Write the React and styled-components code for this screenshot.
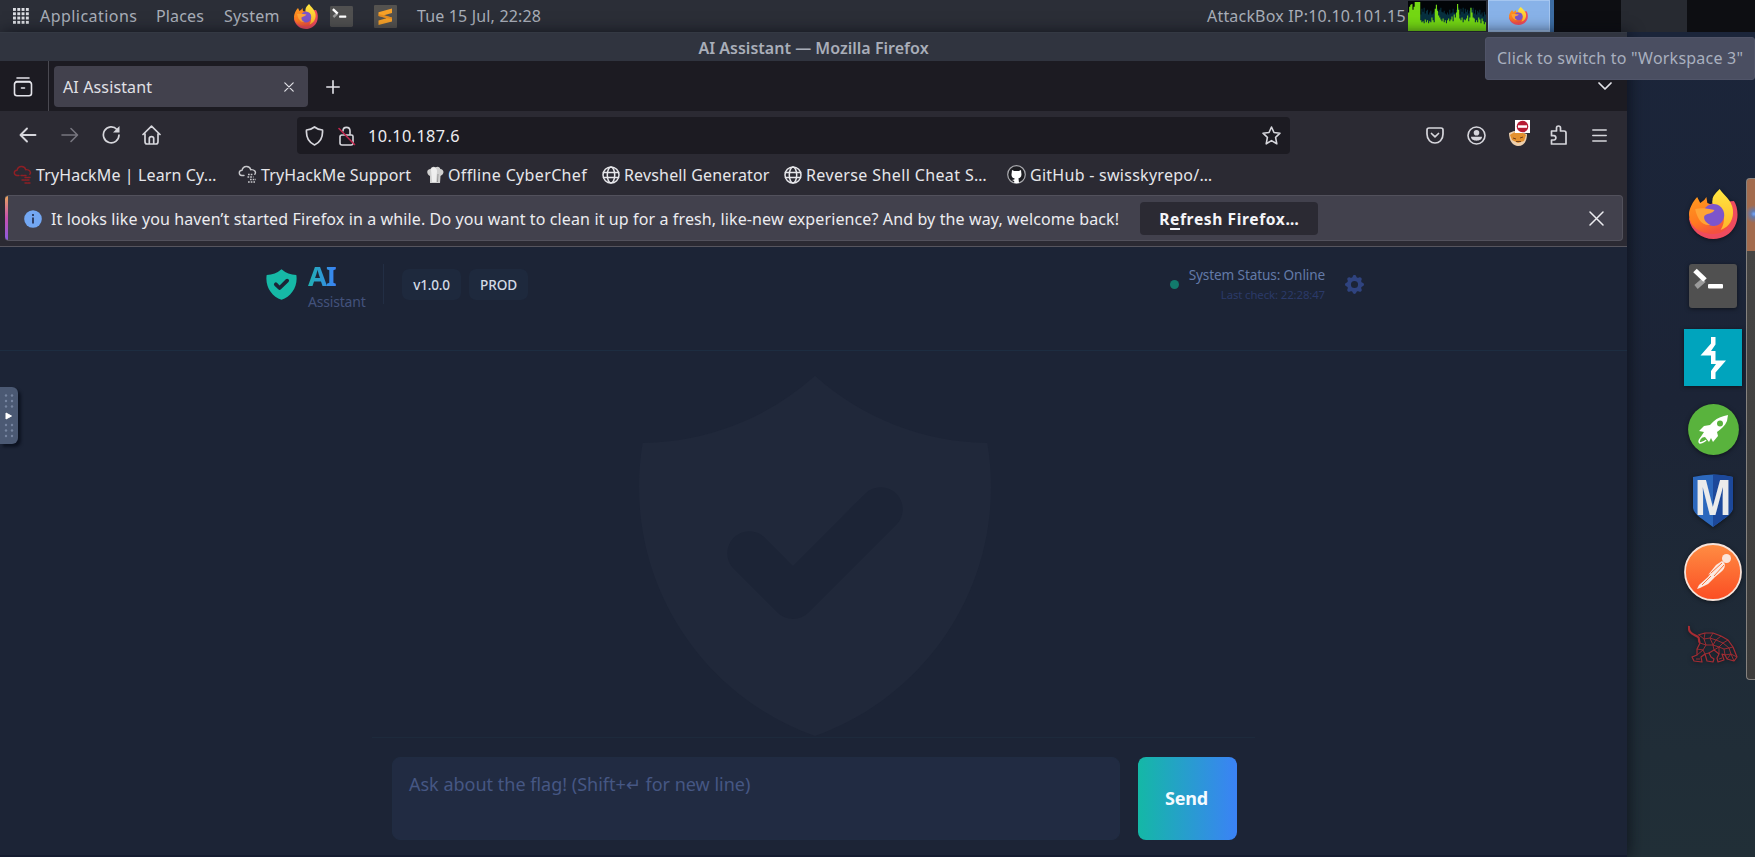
import React from "react";
import styled, { createGlobalStyle, css } from "styled-components";

const GlobalStyle = createGlobalStyle`
  *, *::before, *::after { box-sizing: border-box; }
  html, body { margin: 0; background: #1c2436; overflow: hidden; }
  body { font-family: "Noto Sans", "Open Sans", sans-serif; font-size: 16px; }
  svg { display: block; flex: none; }
`;

const Label = styled.span`
  flex: none;
  width: ${(p) => (p.$w ? `${p.$w}px` : "auto")};
  font-size: ${(p) => p.$size || 16}px;
  font-weight: ${(p) => p.$weight || 400};
  letter-spacing: ${(p) => p.$track || 0}px;
  line-height: 20px;
  color: ${(p) => p.$color || "inherit"};
  white-space: nowrap;
`;

const Screen = styled.div`
  position: relative;
  display: flex;
  flex-direction: column;
  width: 1755px;
  height: 857px;
  overflow: hidden;
`;

/* Desktop panel */
const Panel = styled.header`
  display: flex;
  align-items: center;
  flex: none;
  height: 32px;
  padding-left: 13px;
  background: #2b2e37;
  color: #a9aeb9;
`;
const PanelMenus = styled.nav`
  display: flex;
  gap: 19px;
  margin-left: 11px;
`;
const Launchers = styled.div`
  display: flex;
  align-items: center;
  margin-left: 14px;
`;
const LauncherSlot = styled.div`
  margin-left: ${(p) => p.$ml}px;
`;
const PanelClock = styled.div`
  margin-left: 20px;
`;
const PanelRight = styled.div`
  display: flex;
  align-items: center;
  margin-left: auto;
  height: 32px;
`;
const Workspaces = styled.div`
  display: flex;
  height: 32px;
  margin-left: 2px;
`;
const Workspace = styled.div`
  display: flex;
  align-items: center;
  justify-content: center;
  width: ${(p) => p.$w}px;
  background: ${(p) => (p.$dark ? "#0d0e12" : "#272a31")};
  ${(p) =>
    p.$active &&
    css`
      padding-right: 2px;
      background: #88b2e8;
      border: 1px solid #a5c6f0;
      border-bottom-width: 2px;
      box-shadow: 4px 0 0 #3d6da3;
      z-index: 1;
      margin-right: 4px;
    `}
`;
const Tooltip = styled.div`
  position: absolute;
  z-index: 5;
  top: 37px;
  right: 0;
  width: 270px;
  height: 43px;
  padding: 9px 11px;
  border-radius: 3px;
  background: #4a4e61;
  border: 1px solid #505468;
  color: #a9b0bf;
`;

/* Desktop body */
const Desktop = styled.div`
  display: flex;
  flex: 1;
  min-height: 0;
  background: linear-gradient(180deg, #1b253a 0%, #1c2436 45%, #1f2b37 75%, #212f37 100%);
`;
const Window = styled.main`
  position: relative;
  z-index: 1;
  display: flex;
  flex-direction: column;
  flex: none;
  width: 1627px;
  box-shadow: 2px 0 14px rgba(8, 12, 20, 0.7);
`;
const TitleBar = styled.div`
  display: flex;
  justify-content: center;
  flex: none;
  height: 29px;
  padding-top: 5px;
  background: #30343f;
  border-top: 1px solid #343943;
  color: #a9aeb9;
`;
const TabStrip = styled.div`
  display: flex;
  align-items: center;
  flex: none;
  height: 50px;
  background: #1c1b22;
  color: #e4e4ea;
`;
const ViewButton = styled.div`
  display: flex;
  align-items: center;
  width: 49px;
  height: 50px;
  padding: 2px 0 0 13px;
  border-right: 1px solid #4a4951;
`;
const Tab = styled.div`
  display: flex;
  align-items: center;
  justify-content: space-between;
  width: 254px;
  height: 41px;
  margin: 0 18px 0 5px;
  padding: 1px 14px 0 9px;
  border-radius: 4px;
  background: #42414d;
  color: #e0e0e6;
`;
const PlusButton = styled.div`
  padding-top: 2px;
`;
const TabListButton = styled.div`
  margin: 0 15px 0 auto;
`;
const NavBar = styled.div`
  display: flex;
  align-items: center;
  flex: none;
  height: 47px;
  padding: 1px 18px 0 19px;
  background: #2b2a33;
  color: #d6d6dc;
`;
const NavGroup = styled.div`
  display: flex;
  align-items: center;
`;
const UrlBar = styled.div`
  display: flex;
  align-items: center;
  width: 993px;
  height: 37px;
  margin: 0 135px 0 135px;
  padding: 1px 9px 0 8px;
  border-radius: 4px;
  background: #1c1b22;
`;
const UrlStar = styled.div`
  margin-left: auto;
`;
const Bookmarks = styled.div`
  display: flex;
  align-items: center;
  flex: none;
  height: 37px;
  padding: 0 0 4px 13px;
  background: #2b2a33;
  color: #e6e6ea;
`;
const Bookmark = styled.div`
  display: flex;
  align-items: center;
  width: ${(p) => p.$w}px;
  gap: 4px;
`;
const NoticeArea = styled.div`
  flex: none;
  height: 52px;
  padding: 0 4px 0 5px;
  background: #2b2a33;
  border-bottom: 1px solid #56555e;
`;
const Notice = styled.div`
  display: flex;
  align-items: center;
  height: 46px;
  padding: 1px 18px 0 19px;
  border: 1px solid #52515c;
  border-left: 0;
  border-radius: 4px;
  background:
    linear-gradient(180deg, #e8a45c, #c850b0 50%, #8a5be0) 0 0 / 3px 100% no-repeat,
    #42414d;
  color: #ececf0;
`;
const NoticeText = styled.div`
  margin-left: 9px;
`;
const NoticeButton = styled.button`
  width: 178px;
  height: 33px;
  margin: 0 auto 0 21px;
  padding: 1px 0 0 19px;
  border: 0;
  border-radius: 4px;
  background: #2b2a33;
  color: #f4f4f8;
  font-family: inherit;
  text-align: left;
  u { text-underline-offset: 3px; text-decoration-thickness: 2px; }
`;

/* Page shown in the browser */
const Page = styled.section`
  display: flex;
  flex-direction: column;
  flex: 1;
  min-height: 0;
  background: #1c2436;
`;
const PageHeader = styled.header`
  display: flex;
  flex: none;
  height: 104px;
  padding: 16px 263px 0 266px;
  border-bottom: 1px solid #1d2d41;
`;
const Brand = styled.div`
  display: flex;
  align-items: center;
  height: 42px;
`;
const BrandText = styled.div`
  display: flex;
  flex-direction: column;
  padding-top: 7px;
  margin-left: 11px;
`;
const BrandName = styled.span`
  width: 28px;
  margin: -2px 0 1px;
  font-size: 27.5px;
  font-weight: 700;
  line-height: 30px;
  letter-spacing: -1px;
  color: transparent;
  background: linear-gradient(90deg, #20b0b0, #3b82f6);
  background-clip: text;
  -webkit-background-clip: text;
`;
const BrandDivider = styled.div`
  width: 1px;
  height: 40px;
  margin: 0 18px 0 15px;
  background: #222e44;
`;
const Badge = styled.div`
  display: flex;
  align-items: center;
  justify-content: center;
  width: 59px;
  height: 31px;
  margin: 1px 8px 0 0;
  border-radius: 7px;
  background: #1e293d;
  color: #d3dae5;
`;
const Status = styled.div`
  display: flex;
  align-items: center;
  height: 42px;
  margin-left: auto;
`;
const StatusDot = styled.i`
  width: 9px;
  height: 9px;
  margin: 0 11px 0 0;
  border-radius: 50%;
  background: #127a6c;
`;
const StatusText = styled.div`
  display: flex;
  flex-direction: column;
  align-items: flex-end;
  width: 135px;
  margin: 1px 20px 0 0;
`;
const Conversation = styled.div`
  display: flex;
  flex: none;
  justify-content: center;
  height: 386px;
  padding-left: 2px;
  overflow: hidden;
`;
const Watermark = styled.svg`
  margin-top: -18px;
`;
const Composer = styled.form`
  display: flex;
  gap: 18px;
  width: 883px;
  flex: 1;
  margin: 0 auto;
  padding: 19px 18px 0 20px;
  border-top: 1px solid #1d2a3c;
`;
const Prompt = styled.div`
  width: 728px;
  height: 83px;
  padding: 16px;
  border-radius: 8px;
  border: 1px solid #202c42;
  background: #212b42;
  color: #465784;
`;
const SendButton = styled.button`
  width: 99px;
  height: 83px;
  padding: 0 2px 0 0;
  border: 0;
  border-radius: 8px;
  background: linear-gradient(90deg, #14b8a6, #3b82f6);
  color: #f4fafe;
  font-family: inherit;
`;
const PageEdge = styled.div`
  flex: none;
  height: 2px;
  background: #151c30;
`;

/* Dock */
const DockColumn = styled.aside`
  display: flex;
  flex-direction: column;
  align-items: center;
  flex: 1;
  padding: 157px 0 0 53px;
  svg { filter: drop-shadow(0 1px 2px rgba(0, 0, 0, 0.5)); }
`;
const DockItem = styled.div`
  display: flex;
  align-items: center;
  justify-content: center;
  width: 58px;
  height: ${(p) => p.$h}px;
  margin-bottom: ${(p) => p.$gap}px;
`;
const DockPreview = styled.div`
  flex: none;
  width: 9px;
  height: 502px;
  margin-top: 146px;
  border: 1px solid #85827f;
  border-right: 0;
  border-radius: 4px 0 0 4px;
  background:
    radial-gradient(circle at 7px 35px, #74a8ff 0, #6478a8 3px, transparent 9px),
    linear-gradient(180deg, #a36b4d 0 72px, #454443 72px, #3d3c3b 100%);
`;
const SideHandle = styled.div`
  position: absolute;
  z-index: 6;
  left: 0;
  top: 387px;
  display: flex;
  align-items: center;
  justify-content: center;
  width: 18px;
  height: 57px;
  border-radius: 0 6px 6px 0;
  background: #4b5973;
  box-shadow: 3px 3px 3px rgba(4, 8, 20, 0.6);
`;

const Line = styled.svg.attrs({ fill: "none", stroke: "currentColor", strokeLinecap: "round", strokeLinejoin: "round" })`
  margin-left: ${(p) => p.$ml || 0}px;
  margin-right: ${(p) => p.$mr || 0}px;
`;

const SHIELD =
  "M2.166 4.999A11.954 11.954 0 0010 1.944 11.954 11.954 0 0017.834 5c.11.65.166 1.32.166 2.001 0 5.225-3.34 9.67-8 11.317C5.34 16.67 2 12.225 2 7c0-.682.057-1.35.166-2.001zm11.541 3.708a1 1 0 00-1.414-1.414L9 10.586 7.707 9.293a1 1 0 00-1.414 1.414l2 2a1 1 0 001.414 0l4-4z";
const COG =
  "M11.49 3.17c-.38-1.56-2.6-1.56-2.98 0a1.532 1.532 0 01-2.286.948c-1.372-.836-2.942.734-2.106 2.106.54.886.061 2.042-.947 2.287-1.561.379-1.561 2.6 0 2.978a1.532 1.532 0 01.947 2.287c-.836 1.372.734 2.942 2.106 2.106a1.532 1.532 0 012.287.947c.379 1.561 2.6 1.561 2.978 0a1.533 1.533 0 012.287-.947c1.372.836 2.942-.734 2.106-2.106a1.533 1.533 0 01.947-2.287c1.561-.379 1.561-2.6 0-2.978a1.532 1.532 0 01-.947-2.287c.836-1.372-.734-2.942-2.106-2.106a1.532 1.532 0 01-2.287-.947zM10 13a3 3 0 100-6 3 3 0 000 6z";

function Firefox({ w, h, id }) {
  return (
    <svg width={w} height={h} viewBox="0 0 48 50" preserveAspectRatio="none">
      <defs>
        <linearGradient id={`${id}a`} x1="0" y1="0" x2="0.4" y2="1">
          <stop offset="0" stopColor="#ff9a1f" />
          <stop offset="0.65" stopColor="#ff7a20" />
          <stop offset="1" stopColor="#f4513f" />
        </linearGradient>
        <linearGradient id={`${id}b`} x1="0" y1="0" x2="0" y2="1">
          <stop offset="0" stopColor="#ffe840" />
          <stop offset="1" stopColor="#ffb52b" />
        </linearGradient>
      </defs>
      <path fill="#ee4b5e" d="M44 12C48 18 49 29 45 37C41 45 33 50 24 50C12 50 2 42 0 30L3 22L24 14Z" />
      <path fill={`url(#${id}a)`} d="M8 8L11 14L15 11L17 8L18 14L28 18L42 16C46 29 39 45 24 45C11 45 0 38 0 25C0 20 4 12 8 8Z" />
      <path fill={`url(#${id}b)`} d="M30 0C34 6 42 11 43 21C44 29 40 38 31 41C36 33 35 25 30 19C24 17 22 15 23 11C23 7 27 3 30 0Z" />
      <ellipse cx="24" cy="26" rx="10.5" ry="11" fill="#7d55cb" />
      <path fill="#ffa436" d="M6 20C11 19 16 19 25 21C23 25 18 24 15 27C14 31 17 34 21 36C12 37 8 29 6 20Z" />
    </svg>
  );
}
function Terminal({ w, h }) {
  return (
    <svg width={w} height={h} viewBox="0 0 48 44" preserveAspectRatio="none">
      <rect width="48" height="44" rx="3" fill="#505050" />
      <path d="M7 23L15 16" stroke="#9b9b9b" strokeWidth="5" />
      <path d="M6 6.500L16 16" stroke="#fff" strokeWidth="5" />
      <rect x="19" y="20" width="15" height="4.500" rx="1" fill="#fff" />
    </svg>
  );
}
function Sublime() {
  return (
    <svg width="23" height="23" viewBox="0 0 23 23">
      <rect width="23" height="23" rx="1" fill="#54524f" />
      <path fill="#f7a128" d="M4.500 7.300L18 3.500V8L10 10.300L18 12.500V16.500L4.500 20V15.500L12.500 13.200L4.500 11Z" />
      <path fill="#d9801c" d="M10 10.300L18 12.500V14L12.500 13.200L4.500 11V9Z" opacity=".6" />
    </svg>
  );
}
function Graph() {
  const tops = [12, 6, 4, 3, 9, 6, 1, 1, 1, 1, 1, 20, 22, 21, 23, 19, 22, 20, 23, 21, 22, 17, 20, 22, 8, 4, 10, 15, 17, 19, 21, 18, 22, 20, 23, 20, 18, 21, 19, 16, 21, 14, 17, 12, 3, 9, 18, 20, 17, 22, 19, 20, 18, 15, 21, 17, 7, 12, 17, 18, 22, 20, 22, 17, 19, 23, 18, 21, 24, 22];
  const blue = [20, 20, 20, 20, 20, 20, 20, 20, 20, 20, 20, 14, 8, 11, 7, 13, 10, 9, 14, 12, 10, 14, 13, 11, 8, 4, 8, 11, 9, 7, 11, 12, 10, 13, 14, 12, 14, 9, 13, 12, 8, 12, 13, 9, 3, 7, 14, 8, 11, 7, 13, 8, 11, 9, 13, 10, 7, 9, 7, 13, 9, 14, 10, 12, 9, 14, 12, 16, 11, 14];
  const area = (a) => "M0 31" + a.map((y, i) => `V${y}H${(i + 1) * (78 / a.length)}`).join("") + "V31Z";
  return (
    <svg width="78" height="30" viewBox="0 0 78 31" preserveAspectRatio="none">
      <rect width="78" height="31" fill="#020508" />
      <path d={area(blue)} fill="#07303f" />
      <path d={area(tops)} fill="#74d813" />
    </svg>
  );
}
function Globe() {
  return (
    <Line width="18" height="18" viewBox="0 0 18 18" strokeWidth="1.500">
      <circle cx="9" cy="9" r="8" />
      <ellipse cx="9" cy="9" rx="3.700" ry="8" />
      <path d="M1.500 6.500h15M1.500 11.500h15" />
    </Line>
  );
}
function CloudMark({ color, red }) {
  return (
    <Line width="19" height="19" viewBox="0 0 19 19" strokeWidth="1.400" color={color}>
      <path d="M6 10.500H3.800C.4 10 .5 5.500 4 5.300C5 .5 11.500 .2 12.800 4.700C16.500 4.300 18.500 7 16.800 9.300" />
      {red ? (
        <path strokeDasharray="2 1" d="M8 10.500h5M12 12.500h5M9 15h4M14 15h3M12 18h6" />
      ) : (
        <path strokeWidth="1.700" strokeLinecap="butt" strokeDasharray="1.700 1" d="M10 9.500h5M9.500 12h6M12 14.500h6M10 17h7" />
      )}
    </Line>
  );
}
function Hound() {
  return (
    <svg width="50" height="38" viewBox="0 0 50 38" fill="none" stroke="#a62c33" strokeWidth="1.200" strokeLinejoin="round">
      <path strokeWidth="2.200" d="M1 1C0 8 5 9 10 12C12 13 10 16 12 18" />
      <path d="M10 10L17 8L25 8L33 11L40 15L45 22L49 32L46 36L39 34L37 30L34 29L36 35L30 37L29 33L31 29L26 25L21 28L23 32L26 34L25 37L19 36L17 29L13 32L14 37L6 36L4 32L9 30L9 24L12 18" />
      <path strokeWidth=".9" d="M11 10L16 14L17 8M22 13L25 8M28 15L33 11M35 18L40 15M41 23L45 22M16 14L22 13L28 15L35 18L41 23L36 24M41 23L43 29L49 32M16 14L18 20L12 18M22 13L25 20L28 15M31 22L35 18M36 24L31 22L25 20L18 20L15 25L9 24M25 20L26 25L31 22L31 29M36 24L37 30L43 29L39 34M43 29L46 36M15 25L17 29L21 28M15 25L9 30M8 34L12 34M31 34L34 33" />
    </svg>
  );
}

const bookmarks = [
  { w: 225, text: "TryHackMe | Learn Cy…", track: 0.12, icon: <CloudMark color="#8f1f25" red /> },
  { w: 188, text: "TryHackMe Support", track: 0.12, icon: <CloudMark color="#c8c8cc" /> },
  {
    w: 176, text: "Offline CyberChef", track: 0.35,
    icon: (
      <svg width="18" height="18" viewBox="0 0 18 18">
        <path fill="#d0d0d0" d="M4 17V10C0 8 .5 3 4.500 3C5.500 .5 8 .2 9.500 1.200C12 0 14 1 14.300 3C18 3 19 8 14.500 10L14 17Z" />
        <path fill="#efefef" d="M5 3C8 0 11 2 11 5L10 16H6Z" />
        <path stroke="#999" d="M12 8L11.500 16" />
      </svg>
    ),
  },
  { w: 182, text: "Revshell Generator", track: 0.16, icon: <Globe /> },
  { w: 223, text: "Reverse Shell Cheat S…", track: 0.38, icon: <Globe /> },
  {
    w: 210, text: "GitHub - swisskyrepo/…", track: 0.27,
    icon: (
      <svg width="19" height="19" viewBox="0 0 19 19">
        <circle cx="9.500" cy="9.500" r="8.800" fill="#1d1d22" stroke="#a9a9ae" strokeWidth="1.200" />
        <path fill="#fff" d="M5 5L7.200 6H11.800L14 5L14.300 8C15 12 13 13 11.500 13.200L12 18H7.200V16L5 15L7.400 14.500L7.500 13.200C5 13 4 11 4.700 8Z" />
      </svg>
    ),
  },
];

export default function App() {
  return (
    <Screen>
      <GlobalStyle />
      <Panel>
        <svg width="16" height="16" viewBox="0 0 16 16" fill="#dcdee3">
          {[0, 4.3, 8.6, 12.9].map((y) => [0, 4.3, 8.6, 12.9].map((x) => <rect key={`${x}-${y}`} x={x} y={y} width="2.900" height="2.900" />))}
        </svg>
        <PanelMenus>
          <Label $w={97} $track={0.45}>Applications</Label>
          <Label $w={49} $track={0.14}>Places</Label>
          <Label $w={56} $track={0.2}>System</Label>
        </PanelMenus>
        <Launchers>
          <Firefox w={24} h={25} id="p" />
          <LauncherSlot $ml={12}><Terminal w={23} h={21} /></LauncherSlot>
          <LauncherSlot $ml={21}><Sublime /></LauncherSlot>
        </Launchers>
        <PanelClock><Label $track={0.16}>Tue 15 Jul, 22:28</Label></PanelClock>
        <PanelRight>
          <Label $w={201} $track={0.19}>AttackBox IP:10.10.101.15</Label>
          <Graph />
          <Workspaces>
            <Workspace $w={62} $active><Firefox w={19} h={18} id="w" /></Workspace>
            <Workspace $w={67} $dark />
            <Workspace $w={66} />
            <Workspace $w={68} $dark />
          </Workspaces>
        </PanelRight>
      </Panel>
      <Tooltip><Label $track={0.22}>Click to switch to "Workspace 3"</Label></Tooltip>

      <Desktop>
        <Window>
          <TitleBar><Label $weight={600} $track={0.02}>AI Assistant — Mozilla Firefox</Label></TitleBar>
          <TabStrip>
            <ViewButton>
              <Line width="20" height="20" viewBox="0 0 20 20" strokeWidth="1.600">
                <path d="M4 1H16M3 4.500H17" />
                <rect x="1.500" y="5" width="17" height="13.700" rx="2.500" />
                <path d="M8.500 11H11.500" />
              </Line>
            </ViewButton>
            <Tab>
              <Label $track={0.13}>AI Assistant</Label>
              <Line width="10" height="10" viewBox="0 0 10 10" strokeWidth="1.200"><path d="M.8.8L9.200 9.200M9.200.8L.8 9.200" /></Line>
            </Tab>
            <PlusButton>
              <Line width="14" height="14" viewBox="0 0 14 14" strokeWidth="1.600"><path d="M7 .8V13.200M.8 7H13.200" /></Line>
            </PlusButton>
            <TabListButton>
              <Line width="14" height="8" viewBox="0 0 14 8" strokeWidth="1.700"><path d="M1 1L7 7L13 1" /></Line>
            </TabListButton>
          </TabStrip>
          <NavBar>
            <NavGroup>
              <Line width="18" height="16" viewBox="0 0 18 16" strokeWidth="1.900"><path d="M16.500 8H2M8 1.500L1.500 8L8 14.500" /></Line>
              <Line width="18" height="16" viewBox="0 0 18 16" strokeWidth="1.600" color="#77767f" $ml={24}><path d="M1 8H16M10 1.500L16.500 8L10 14.500" /></Line>
              <Line width="19" height="20" viewBox="0 0 19 20" strokeWidth="1.700" $ml={23}><path d="M17 10A7.800 8 0 1 1 15 4.500" /><path fill="currentColor" stroke="none" d="M17.500 1V7.500H11Z" /></Line>
              <Line width="19" height="20" viewBox="0 0 19 20" strokeWidth="1.700" $ml={21} $mr={1}><path d="M1 9.500L9.500 1.200L18 9.500M3 8.500V16.500C3 18 3.500 19 5 19H14C15.500 19 16 18 16 16.500V8.500M7.300 18.500V13.500C7.300 11 11.700 11 11.700 13.500V18.500" /></Line>
            </NavGroup>
            <UrlBar>
              <Line width="19" height="20" viewBox="0 0 19 20" strokeWidth="1.700"><path d="M9.500 1C12 3 14.500 3.800 17.500 4C18 11 15.500 16.500 9.500 19C3.500 16.500 1 11 1.500 4C4.500 3.800 7 3 9.500 1Z" /></Line>
              <Line width="18" height="20" viewBox="0 0 18 20" strokeWidth="1.600" $ml={14} $mr={12}>
                <path d="M5 5C5 .2 12 .2 12 5V9M5 9H13.500C14.500 9 15 9.500 15 10.500V17C15 18.300 14.500 19 13 19H4C2.500 19 2 18.300 2 17V11C2 9.800 2.500 9 4 9" />
                <path stroke="#c0284e" d="M1 2.500L16.500 18.500" />
              </Line>
              <Label $size={16.3} $track={0.4} $color="#ececf0">10.10.187.6</Label>
              <UrlStar>
                <Line width="19" height="19" viewBox="0 0 19 19" strokeWidth="1.600"><path d="M9.500 1L12 6.500L18 7.200L13.600 11.300L14.800 17.800L9.500 14.600L4.200 17.800L5.400 11.300L1 7.200L7 6.500Z" /></Line>
              </UrlStar>
            </UrlBar>
            <NavGroup>
              <Line width="18" height="17" viewBox="0 0 18 17" strokeWidth="1.700" $ml={1}><path d="M3 1H15Q17 1 17 3V7C17 19 1 19 1 7V3Q1 1 3 1ZM5.500 6.500L9 9.800L12.500 6.500" /></Line>
              <Line width="19" height="19" viewBox="0 0 19 19" strokeWidth="1.600" $ml={23} $mr={22}><circle cx="9.500" cy="9.500" r="8.500" /><circle cx="9.500" cy="6.800" r="2.800" fill="currentColor" stroke="none" /><path fill="currentColor" stroke="none" d="M4 10.800H15C15 16 4 16 4 10.800Z" /></Line>
              <svg width="24" height="32" viewBox="0 0 24 32">
                <path fill="#edcfad" d="M1 14L6 12L19 15C19 22 16 27 10 27C5 27 1 22 1 14Z" />
                <path fill="#e4912f" d="M2 16C6 12 14 12 18 16L16 22L10 24L4 21Z" />
                <path stroke="#754018" d="M5 19L8 20M12 19L15 18M8 22.500L13 22.500" />
                <rect x="7" y="1" width="15" height="13" fill="#fff" />
                <circle cx="14.500" cy="7.500" r="5.800" fill="#b71d35" />
                <rect x="10" y="6.300" width="9" height="2.500" fill="#fff" />
              </svg>
              <Line width="18" height="20" viewBox="0 0 18 20" strokeWidth="1.700" $ml={18} $mr={24}><path d="M1.500 6H6.500V3C6.500 .3 10.500 .3 10.500 3V6H14Q16 6 16 8V19H1.500V15H4C6.500 15 6.500 10.700 4 10.700H1.500Z" /></Line>
              <Line width="15" height="13" viewBox="0 0 15 13" strokeWidth="1.500"><path d="M.8 1H14.200M.8 6.500H14.200M.8 12H14.200" /></Line>
            </NavGroup>
          </NavBar>
          <Bookmarks>
            {bookmarks.map((b) => (
              <Bookmark key={b.text} $w={b.w}>
                {b.icon}
                <Label $track={b.track}>{b.text}</Label>
              </Bookmark>
            ))}
          </Bookmarks>
          <NoticeArea>
            <Notice>
              <svg width="18" height="18" viewBox="0 0 18 18">
                <circle cx="9" cy="9" r="8.800" fill="#73a7f3" />
                <path fill="#2f3f66" d="M8 4h2v2H8zM8 7.500h2v6H8z" />
              </svg>
              <NoticeText>
                <Label $track={0.12}>
                  It looks like you haven’t started Firefox in a while. Do you want to clean it up for a fresh, like-new experience? And by the way, welcome back!
                </Label>
              </NoticeText>
              <NoticeButton>
                <Label $size={15.6} $weight={700} $track={0.6}>R<u>e</u>fresh Firefox…</Label>
              </NoticeButton>
              <Line width="15" height="15" viewBox="0 0 15 15" strokeWidth="1.500"><path d="M1 1L14 14M14 1L1 14" /></Line>
            </Notice>
          </NoticeArea>

          <Page>
            <PageHeader>
              <Brand>
                <svg width="31" height="31" viewBox="1.800 1.800 16.400 16.600" preserveAspectRatio="none"><path fillRule="evenodd" fill="#16b8a6" d={SHIELD} /></svg>
                <BrandText>
                  <BrandName>AI</BrandName>
                  <Label $w={60} $size={14} $track={-0.2} $color="#43527c">Assistant</Label>
                </BrandText>
                <BrandDivider />
                <Badge><Label $size={13.6} $weight={500} $track={-0.23}>v1.0.0</Label></Badge>
                <Badge><Label $size={13.6} $weight={500} $track={-0.12}>PROD</Label></Badge>
              </Brand>
              <Status>
                <StatusDot />
                <StatusText>
                  <Label $size={13.6} $track={-0.12} $color="#637aa8">System Status: Online</Label>
                  <Label $size={11.4} $track={-0.12} $color="#2b3a69">Last check: 22:28:47</Label>
                </StatusText>
                <svg width="19" height="19" viewBox="2 2 16 16"><path fillRule="evenodd" fill="#2f437f" d={COG} /></svg>
              </Status>
            </PageHeader>
            <Conversation>
              <Watermark width="440" height="440" viewBox="0 0 20 20"><path fillRule="evenodd" fill="#20283a" d={SHIELD} /></Watermark>
            </Conversation>
            <Composer>
              <Prompt><Label $size={18}>Ask about the flag! (Shift+↵ for new line)</Label></Prompt>
              <SendButton type="button"><Label $size={18} $weight={700} $track={-0.19}>Send</Label></SendButton>
            </Composer>
            <PageEdge />
          </Page>
        </Window>

        <DockColumn>
          <DockItem $h={50} $gap={25}><Firefox w={49} h={50} id="d" /></DockItem>
          <DockItem $h={44} $gap={21}><Terminal w={48} h={44} /></DockItem>
          <DockItem $h={57} $gap={18}>
            <svg width="58" height="57" viewBox="0 0 58 57">
              <rect width="58" height="57" fill="#00a4bd" />
              <path fill="#fff" d="M27 8H31.500V15.500L27 22H31.500V31.500H42L31.500 43.500V50H27V42L32 35H27V26.500H16.500L27 14.500Z" />
            </svg>
          </DockItem>
          <DockItem $h={51} $gap={19}>
            <svg width="51" height="51" viewBox="0 0 51 51">
              <circle cx="25.500" cy="25.500" r="25.400" fill="#59b33d" />
              <path fill="#fff" fillRule="evenodd" d="M40 11L39 17C37 22 33 25 29 28L30 32L25 38L23 34L21 38L17 33L12 34L16 28L11 27L16 22L22 21C26 16 31 13 36 12ZM32 16.500A3 3 0 1 0 32 22.500A3 3 0 1 0 32 16.500" />
              <path d="M14 33C10 36 11 39 12 39C15 38 17 38 18 36" fill="none" stroke="#fff" strokeWidth="1.500" />
            </svg>
          </DockItem>
          <DockItem $h={54} $gap={15}>
            <svg width="42" height="82" viewBox="0 -14 42 82">
              <path fill="#2c68bd" d="M1 3Q21 -2 41 3V34C40 41 31 45 21 53C11 45 2 41 1 34Z" />
              <path fill="#1c489a" d="M21 .5Q33 .5 41 3V34C40 41 31 45 21 53Z" />
              <text x="21" y="41" textAnchor="middle" textLength="38" lengthAdjust="spacingAndGlyphs" fontFamily="Noto Sans, sans-serif" fontSize="48" fontWeight="700" fill="#ebebeb">M</text>
            </svg>
          </DockItem>
          <DockItem $h={58} $gap={24}>
            <svg width="58" height="58" viewBox="0 0 58 58">
              <defs><linearGradient id="pm" x1="0" y1="0" x2="0" y2="1"><stop offset="0" stopColor="#ff8d43" /><stop offset="1" stopColor="#fb4d23" /></linearGradient></defs>
              <circle cx="29" cy="29" r="28" fill="url(#pm)" stroke="#f7e3da" strokeWidth="1.800" />
              <circle cx="42.500" cy="15.500" r="4.500" fill="#fbe5da" />
              <path fill="#fbe9e1" d="M38 18C42 20 42 25 37 29L31 34L24 41L16 45L13 46L15 42L24 34L27 30L24 32L32 22Z" />
              <path stroke="#f9743a" d="M38 20L27 30M40 22L30 33M27 33L18 42" fill="none" />
            </svg>
          </DockItem>
          <DockItem $h={38} $gap={0}><Hound /></DockItem>
        </DockColumn>
        <DockPreview />
      </Desktop>
      <SideHandle>
        <svg width="12" height="44" viewBox="0 0 12 44">
          {[1.5, 7, 12.5, 31, 36.5, 42].map((y) => [3, 9].map((x) => <circle key={`${x}-${y}`} cx={x} cy={y} r="1.200" fill="#7685a0" />))}
          <path fill="#fff" d="M3 19L8.500 22L3 25Z" stroke="#fff" strokeLinejoin="round" />
        </svg>
      </SideHandle>
    </Screen>
  );
}
